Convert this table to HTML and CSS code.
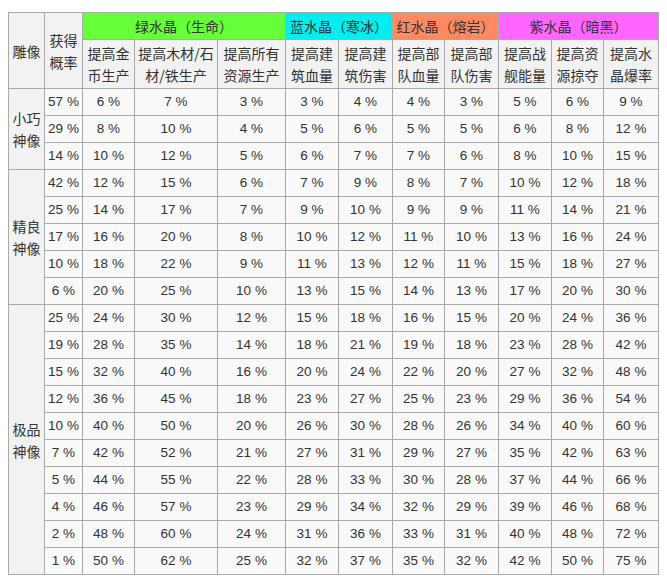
FILE: index.html
```html
<!DOCTYPE html>
<html lang="zh">
<head>
<meta charset="utf-8">
<link rel="stylesheet" href="styles.css">
</head>
<body>
<table class="wikitable">
<colgroup>
<col class="c36"><col class="c38"><col class="c52"><col class="c83"><col class="c68"><col class="c53"><col class="c54"><col class="c52"><col class="c54"><col class="c53"><col class="c52"><col class="c55">
</colgroup>
<thead>
<tr class="r1">
<th rowspan="2">雕像</th>
<th rowspan="2">获得<br>概率</th>
<th colspan="3" class="green">绿水晶（生命）</th>
<th colspan="2" class="cyan">蓝水晶（寒冰）</th>
<th colspan="2" class="red">红水晶（熔岩）</th>
<th colspan="3" class="purple">紫水晶（暗黑）</th>
</tr>
<tr>
<th>提高金<br>币生产</th>
<th>提高木材/石<br>材/铁生产</th>
<th>提高所有<br>资源生产</th>
<th>提高建<br>筑血量</th>
<th>提高建<br>筑伤害</th>
<th>提高部<br>队血量</th>
<th>提高部<br>队伤害</th>
<th>提高战<br>舰能量</th>
<th>提高资<br>源掠夺</th>
<th>提高水<br>晶爆率</th>
</tr>
</thead>
<tbody>
<tr><th rowspan="3">小巧<br>神像</th><td>57 %</td><td>6 %</td><td>7 %</td><td>3 %</td><td>3 %</td><td>4 %</td><td>4 %</td><td>3 %</td><td>5 %</td><td>6 %</td><td>9 %</td></tr>
<tr><td>29 %</td><td>8 %</td><td>10 %</td><td>4 %</td><td>5 %</td><td>6 %</td><td>5 %</td><td>5 %</td><td>6 %</td><td>8 %</td><td>12 %</td></tr>
<tr><td>14 %</td><td>10 %</td><td>12 %</td><td>5 %</td><td>6 %</td><td>7 %</td><td>7 %</td><td>6 %</td><td>8 %</td><td>10 %</td><td>15 %</td></tr>
<tr><th rowspan="5">精良<br>神像</th><td>42 %</td><td>12 %</td><td>15 %</td><td>6 %</td><td>7 %</td><td>9 %</td><td>8 %</td><td>7 %</td><td>10 %</td><td>12 %</td><td>18 %</td></tr>
<tr><td>25 %</td><td>14 %</td><td>17 %</td><td>7 %</td><td>9 %</td><td>10 %</td><td>9 %</td><td>9 %</td><td>11 %</td><td>14 %</td><td>21 %</td></tr>
<tr><td>17 %</td><td>16 %</td><td>20 %</td><td>8 %</td><td>10 %</td><td>12 %</td><td>11 %</td><td>10 %</td><td>13 %</td><td>16 %</td><td>24 %</td></tr>
<tr><td>10 %</td><td>18 %</td><td>22 %</td><td>9 %</td><td>11 %</td><td>13 %</td><td>12 %</td><td>11 %</td><td>15 %</td><td>18 %</td><td>27 %</td></tr>
<tr><td>6 %</td><td>20 %</td><td>25 %</td><td>10 %</td><td>13 %</td><td>15 %</td><td>14 %</td><td>13 %</td><td>17 %</td><td>20 %</td><td>30 %</td></tr>
<tr><th rowspan="10">极品<br>神像</th><td>25 %</td><td>24 %</td><td>30 %</td><td>12 %</td><td>15 %</td><td>18 %</td><td>16 %</td><td>15 %</td><td>20 %</td><td>24 %</td><td>36 %</td></tr>
<tr><td>19 %</td><td>28 %</td><td>35 %</td><td>14 %</td><td>18 %</td><td>21 %</td><td>19 %</td><td>18 %</td><td>23 %</td><td>28 %</td><td>42 %</td></tr>
<tr><td>15 %</td><td>32 %</td><td>40 %</td><td>16 %</td><td>20 %</td><td>24 %</td><td>22 %</td><td>20 %</td><td>27 %</td><td>32 %</td><td>48 %</td></tr>
<tr><td>12 %</td><td>36 %</td><td>45 %</td><td>18 %</td><td>23 %</td><td>27 %</td><td>25 %</td><td>23 %</td><td>29 %</td><td>36 %</td><td>54 %</td></tr>
<tr><td>10 %</td><td>40 %</td><td>50 %</td><td>20 %</td><td>26 %</td><td>30 %</td><td>28 %</td><td>26 %</td><td>34 %</td><td>40 %</td><td>60 %</td></tr>
<tr><td>7 %</td><td>42 %</td><td>52 %</td><td>21 %</td><td>27 %</td><td>31 %</td><td>29 %</td><td>27 %</td><td>35 %</td><td>42 %</td><td>63 %</td></tr>
<tr><td>5 %</td><td>44 %</td><td>55 %</td><td>22 %</td><td>28 %</td><td>33 %</td><td>30 %</td><td>28 %</td><td>37 %</td><td>44 %</td><td>66 %</td></tr>
<tr><td>4 %</td><td>46 %</td><td>57 %</td><td>23 %</td><td>29 %</td><td>34 %</td><td>32 %</td><td>29 %</td><td>39 %</td><td>46 %</td><td>68 %</td></tr>
<tr><td>2 %</td><td>48 %</td><td>60 %</td><td>24 %</td><td>31 %</td><td>36 %</td><td>33 %</td><td>31 %</td><td>40 %</td><td>48 %</td><td>72 %</td></tr>
<tr><td>1 %</td><td>50 %</td><td>62 %</td><td>25 %</td><td>32 %</td><td>37 %</td><td>35 %</td><td>32 %</td><td>42 %</td><td>50 %</td><td>75 %</td></tr>
</tbody>
</table>
</body>
</html>
```
FILE: styles.css
```css
html, body {
  background: #ffffff;
}
body {
  margin: 12px 8px 8px 8px;
  font-family: "Liberation Sans", "Noto Sans CJK SC", sans-serif;
  color: #333333;
}
.wikitable {
  border-collapse: collapse;
  table-layout: fixed;
  width: 651px;
  background: #f9f9f9;
  border: 1px solid #aaaaaa;
}
.c36 { width: 36px; }
.c38 { width: 38px; }
.c52 { width: 52px; }
.c53 { width: 53px; }
.c54 { width: 54px; }
.c55 { width: 55px; }
.c68 { width: 68px; }
.c83 { width: 83px; }
.wikitable th,
.wikitable td {
  border: 1px solid #aaaaaa;
  padding: 2px 0;
  line-height: 22px;
  text-align: center;
  vertical-align: middle;
  white-space: nowrap;
  overflow: hidden;
}
.wikitable th {
  font-family: "Noto Sans CJK SC", "Liberation Sans", sans-serif;
  font-weight: normal;
  font-size: 14px;
  background: #f2f2f2;
}
.wikitable td {
  font-size: 13.5px;
}
.wikitable .green { background: #66ff3a; }
.wikitable .cyan { background: #00eeef; }
.wikitable .red { background: #ff8a62; }
.wikitable .purple { background: #ff66ff; }
```
